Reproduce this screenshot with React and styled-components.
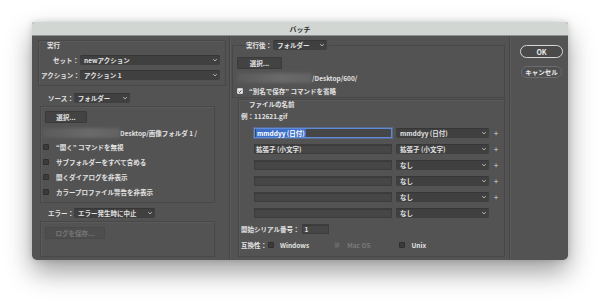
import React from "react";
import styled, { createGlobalStyle } from "styled-components";

const GlobalStyle = createGlobalStyle`
  html, body {
    margin: 0;
    background: #ffffff;
  }
  body {
    font-family: "Noto Sans CJK JP", "Noto Sans", sans-serif;
  }
`;

const Page = styled.div`
  padding: 22px 32px;
  width: 600px;
  height: 302px;
  box-sizing: border-box;
  overflow: hidden;
`;

const Window = styled.div`
  width: 536px;
  height: 238px;
  background: #535353;
  border-radius: 3px 3px 5px 5px;
  box-shadow: 0 12px 26px rgba(0, 0, 0, 0.38), 0 0 6px rgba(0, 0, 0, 0.15);
  display: flex;
  flex-direction: column;
  overflow: hidden;
  color: #e2e2e2;
  font-size: 6.5px;
  font-weight: 700;
  line-height: 8px;
`;

const TitleBar = styled.div`
  height: 14px;
  flex: none;
  background: #d1d6d3;
  border-bottom: 1px solid #8e918f;
  box-sizing: border-box;
  display: flex;
  align-items: center;
  justify-content: center;
  color: #2e2e2e;
  font-size: 7px;
`;

const Body = styled.div`
  flex: 1;
  display: flex;
`;

const Column = styled.div`
  width: ${(p) => p.$w}px;
  box-sizing: border-box;
  padding: ${(p) => p.$pad || "4px 0 0 0"};
  border-right: ${(p) => (p.$last ? "none" : "1px solid #464646")};
  box-shadow: ${(p) => (p.$last ? "none" : "1px 0 0 #5b5b5b")};
  display: flex;
  flex-direction: column;
`;

const Group = styled.div`
  box-sizing: border-box;
  border: 1px solid #484848;
  box-shadow: inset 1px 1px 0 #5a5a5a;
  margin: ${(p) => p.$m || "0"};
  width: ${(p) => p.$w}px;
  height: ${(p) => p.$h}px;
  padding: ${(p) => p.$pad || "0"};
  display: flex;
  flex-direction: column;
`;

const Fieldset = styled.fieldset`
  box-sizing: border-box;
  margin: 0 0 0 2px;
  padding: 0 0 1px 4px;
  width: 273px;
  min-width: 0;
  border: 1px solid #484848;
  display: flex;
  flex-direction: column;
`;

const Legend = styled.legend`
  padding: 0 2px;
  margin-left: 7px;
  height: 10px;
`;

const GroupTitle = styled.div`
  height: 8px;
  margin-left: ${(p) => p.$ml || 0}px;
`;

const Row = styled.div`
  display: flex;
  align-items: center;
  height: 10px;
  margin-top: ${(p) => p.$mt || 0}px;
  margin-left: ${(p) => p.$ml || 0}px;
  white-space: nowrap;
`;

const Label = styled.span`
  width: ${(p) => (p.$w ? `${p.$w}px` : "auto")};
  text-align: ${(p) => (p.$w ? "right" : "left")};
  flex: none;
  margin-right: ${(p) => p.$mr || 0}px;
  color: ${(p) => (p.$dim ? "#7c7c7c" : "#e2e2e2")};
`;

const SelectBox = styled.div`
  width: ${(p) => p.$w}px;
  height: 10px;
  margin-left: ${(p) => p.$ml || 0}px;
  box-sizing: border-box;
  background: #404040;
  border-radius: 2px;
  box-shadow: inset 0 1px 0 #363636;
  display: flex;
  align-items: center;
  justify-content: space-between;
  padding: 0 2px 0 4px;
  flex: none;
`;

const Chevron = styled.svg`
  width: 6px;
  height: 6px;
  flex: none;
`;

const Button = styled.div`
  width: ${(p) => p.$w}px;
  height: 12px;
  margin: ${(p) => p.$m || "0"};
  box-sizing: border-box;
  background: ${(p) => (p.$disabled ? "#4e4e4e" : "#434343")};
  border: 1px solid ${(p) => (p.$disabled ? "#494949" : "#3a3a3a")};
  border-radius: 1px;
  color: ${(p) => (p.$disabled ? "#767676" : "#e6e6e6")};
  display: flex;
  align-items: center;
  justify-content: center;
  flex: none;
`;

const PillButton = styled.div`
  width: ${(p) => p.$w}px;
  height: ${(p) => p.$h}px;
  margin: ${(p) => p.$m || "0"};
  box-sizing: border-box;
  border-radius: 7px;
  background: ${(p) => (p.$primary ? "#4a4a4a" : "#505050")};
  border: 1px solid ${(p) => (p.$primary ? "#d6d6d6" : "#6c6c6c")};
  color: #ececec;
  display: flex;
  align-items: center;
  justify-content: center;
  font-size: ${(p) => (p.$primary ? 7 : 6.5)}px;
`;

const Blurred = styled.div`
  width: ${(p) => p.$w}px;
  height: 10px;
  margin-left: ${(p) => p.$ml || 0}px;
  background: linear-gradient(90deg, #5a5a5a, #6a6a6a 60%, #626262);
  filter: blur(1.5px);
  flex: none;
`;

const Box = styled.span`
  width: 6px;
  height: 6px;
  box-sizing: border-box;
  border-radius: 1px;
  flex: none;
  margin-left: ${(p) => p.$ml || 0}px;
  margin-right: ${(p) => p.$mr || 6}px;
  background: ${(p) => (p.$checked ? (p.$disabled ? "#626262" : "#e9e9e9") : "#3b3b3b")};
  border: 1px solid ${(p) => (p.$checked ? (p.$disabled ? "#5a5a5a" : "#d0d0d0") : "#2f2f2f")};
  display: flex;
  align-items: center;
  justify-content: center;
`;

const TextField = styled.div`
  width: ${(p) => p.$w}px;
  height: 10px;
  margin-left: ${(p) => p.$ml || 0}px;
  box-sizing: border-box;
  background: #464646;
  border: 1px solid ${(p) => (p.$focus ? "#5f8ad8" : "#3d3d3d")};
  box-shadow: ${(p) => (p.$focus ? "0 0 0 1px rgba(95,138,216,0.45)" : "inset 0 1px 0 #3a3a3a")};
  display: flex;
  align-items: center;
  padding-left: 1px;
  flex: none;
`;

const Selection = styled.span`
  background: #3f70c8;
  color: #ffffff;
  padding: 0 1px;
  line-height: 8px;
`;

const Plus = styled.span`
  margin-left: 4px;
  width: 6px;
  text-align: center;
  color: #bdbdbd;
  font-size: 7px;
`;

function Select({ w, ml, children }) {
  return (
    <SelectBox $w={w} $ml={ml}>
      <span>{children}</span>
      <Chevron viewBox="0 0 6 6">
        <polyline points="1.3,2.2 3,3.9 4.7,2.2" fill="none" stroke="#cfcfcf" strokeWidth="0.9" />
      </Chevron>
    </SelectBox>
  );
}

function Check({ checked, disabled, ml, mr, children }) {
  return (
    <>
      <Box $checked={checked} $disabled={disabled} $ml={ml} $mr={mr}>
        {checked && (
          <svg width="5" height="5" viewBox="0 0 5 5">
            <polyline
              points="0.8,2.6 2,3.8 4.2,1"
              fill="none"
              stroke={disabled ? "#808080" : "#2a2a2a"}
              strokeWidth="1"
            />
          </svg>
        )}
      </Box>
      {children && <Label $dim={disabled}>{children}</Label>}
    </>
  );
}

const nameRows = [
  { field: "mmddyy (日付)", focus: true, value: "mmddyy (日付)", plus: true },
  { field: "拡張子 (小文字)", value: "拡張子 (小文字)", plus: true },
  { field: "", value: "なし", plus: true },
  { field: "", value: "なし", plus: true },
  { field: "", value: "なし", plus: true },
  { field: "", value: "なし", plus: false },
];

const sourceChecks = [
  "\u201C開く\u201D コマンドを無視",
  "サブフォルダーをすべて含める",
  "開くダイアログを非表示",
  "カラープロファイル警告を非表示",
];

export default function App() {
  return (
    <Page>
      <GlobalStyle />
      <Window>
        <TitleBar>バッチ</TitleBar>
        <Body>
          <Column $w={198} $pad="4px 0 0 6px">
            <Group $w={188} $h={46} $pad="0 5px 0 2px">
              <GroupTitle $ml={6}>実行</GroupTitle>
              <Row $mt={6}>
                <Label $w={38}>セット：</Label>
                <Select w={140} ml={1}>newアクション</Select>
              </Row>
              <Row $mt={5}>
                <Label $w={38}>アクション：</Label>
                <Select w={140} ml={1}>アクション 1</Select>
              </Row>
            </Group>

            <Row $mt={7} $ml={10}>
              <Label>ソース：</Label>
              <Select w={56}>フォルダー</Select>
            </Row>
            <Group $w={175} $h={97} $m="3px 0 0 2px" $pad="0 0 0 1px">
              <Button $w={42} $m="4px 0 0 3px">選択...</Button>
              <Row $mt={5}>
                <Blurred $w={78} />
                <Label>Desktop/画像フォルダ 1 /</Label>
              </Row>
              {sourceChecks.map((t, i) => (
                <Row key={t} $mt={i === 0 ? 4 : 5} $ml={1}>
                  <Check mr={7}>{t}</Check>
                </Row>
              ))}
            </Group>

            <Row $mt={5} $ml={10}>
              <Label>エラー：</Label>
              <Select w={81}>エラー発生時に中止</Select>
            </Row>
            <Group $w={175} $h={36} $m="3px 0 0 2px" $pad="0 0 0 1px">
              <Button $w={60} $m="5px 0 0 3px" $disabled>
                ログを保存...
              </Button>
            </Group>
          </Column>

          <Column $w={280}>
            <Fieldset>
              <Legend>
                <Row>
                  <Label>実行後：</Label>
                  <Select w={54} ml={1}>フォルダー</Select>
                </Row>
              </Legend>
              <Button $w={45} $m="7px 0 0 0">選択...</Button>
              <Row $mt={4}>
                <Blurred $w={75} />
                <Label>/Desktop/600/</Label>
              </Row>
              <Row $mt={3}>
                <Check checked mr={6}>
                  {"\u201C別名で保存\u201D コマンドを省略"}
                </Check>
              </Row>
            </Fieldset>

            <Group $w={267} $h={158} $m="1px 0 0 8px" $pad="0 0 0 2px">
              <GroupTitle $ml={8}>ファイルの名前</GroupTitle>
              <Row $mt={3}>
                <Label>例：112621.gif</Label>
              </Row>
              {nameRows.map((r, i) => (
                <Row key={i} $mt={i === 0 ? 7 : 6}>
                  <TextField $w={138} $ml={13} $focus={r.focus}>
                    {r.focus ? <Selection>{r.field}</Selection> : r.field}
                  </TextField>
                  <Select w={93} ml={4}>{r.value}</Select>
                  {r.plus && <Plus>+</Plus>}
                </Row>
              ))}
              <Row $mt={6}>
                <Label $mr={3}>開始シリアル番号：</Label>
                <TextField $w={27}>1</TextField>
              </Row>
              <Row $mt={6}>
                <Label $mr={1}>互換性：</Label>
                <Check mr={6}>Windows</Check>
                <Check checked disabled ml={25} mr={7}>
                  Mac OS
                </Check>
                <Check ml={29} mr={6}>Unix</Check>
              </Row>
            </Group>
          </Column>

          <Column $w={58} $last $pad="9px 0 0 10px">
            <PillButton $w={43} $h={13} $primary>
              OK
            </PillButton>
            <PillButton $w={41} $h={12} $m="8px 0 0 1px">
              キャンセル
            </PillButton>
          </Column>
        </Body>
      </Window>
    </Page>
  );
}
